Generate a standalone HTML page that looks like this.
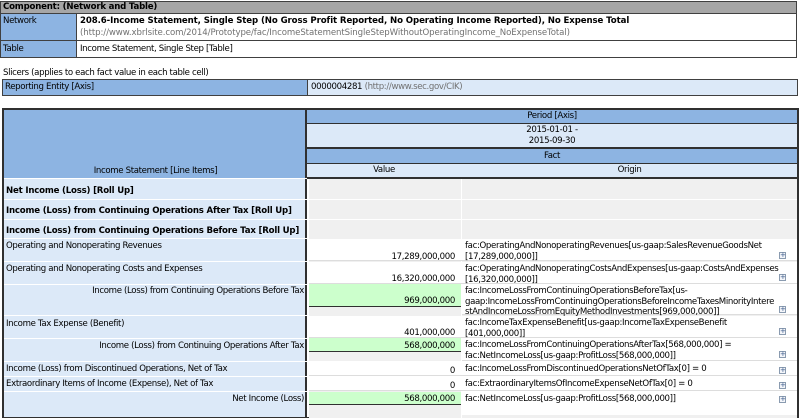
<!DOCTYPE html>
<html><head><meta charset="utf-8"><style>
*{margin:0;padding:0;box-sizing:border-box}
body{width:800px;height:419px;background:#fff;font-family:"DejaVu Sans","Liberation Sans",sans-serif;font-size:8.6px;color:#000;position:relative;overflow:hidden;letter-spacing:-0.35px}
.a{position:absolute;white-space:nowrap}
.b{font-weight:bold;letter-spacing:-0.2px}
.g{color:#707070}
.bl{background:#8db4e2}
.lb{background:#dce9f8}
.gr{background:#f0f0f0}
.gn{background:#ccffcc}
.pl{position:absolute;width:7px;height:7px;border:1px solid #8a9bb0;background:#f4f6fa;font-size:7px;line-height:5px;text-align:center;color:#3a5a8a;letter-spacing:0}
</style></head><body>
<div class="a" style="left:0;top:1px;width:797px;height:13px;background:#a6a6a6;border:1px solid #404040"></div>
<div class="a b" style="left:3px;top:2px">Component: (Network and Table)</div>
<div class="a" style="left:0;top:14px;width:797px;height:44px;border:1px solid #404040;border-top:none"></div>
<div class="a bl" style="left:1px;top:14px;width:76px;height:26px;border-right:1px solid #404040"></div>
<div class="a" style="left:0;top:40px;width:797px;height:1px;background:#404040"></div>
<div class="a bl" style="left:1px;top:41px;width:76px;height:16px;border-right:1px solid #404040"></div>
<div class="a" style="left:3px;top:16px">Network</div>
<div class="a b" style="left:80px;top:16px;letter-spacing:-0.1px">208.6-Income Statement, Single Step (No Gross Profit Reported, No Operating Income Reported), No Expense Total</div>
<div class="a g" style="left:80px;top:28px;letter-spacing:-0.1px">(http://www.xbrlsite.com/2014/Prototype/fac/IncomeStatementSingleStepWithoutOperatingIncome_NoExpenseTotal)</div>
<div class="a" style="left:3px;top:44px">Table</div>
<div class="a" style="left:80px;top:44px">Income Statement, Single Step [Table]</div>
<div class="a" style="left:3px;top:68px">Slicers (applies to each fact value in each table cell)</div>
<div class="a bl" style="left:2px;top:79px;width:306px;height:17px;border:1px solid #404040"></div>
<div class="a lb" style="left:307px;top:79px;width:491px;height:17px;border:1px solid #404040"></div>
<div class="a" style="left:5px;top:82px">Reporting Entity [Axis]</div>
<div class="a" style="left:311px;top:82px">0000004281 <span class="g">(http://www.sec.gov/CIK)</span></div>
<div class="a" style="left:2px;top:108px;width:797px;height:310px;border:2px solid #303030;border-bottom-width:1px"></div>
<div class="a bl" style="left:4px;top:110px;width:303px;height:68px;border-right:2px solid #303030"></div>
<div class="a" style="left:4px;top:166px;width:303px;text-align:center">Income Statement [Line Items]</div>
<div class="a lb" style="left:4px;top:179px;width:303px;height:238px;border-right:2px solid #303030"></div>
<div class="a bl" style="left:307px;top:110px;width:490px;height:14px;border-bottom:1px solid #303030"></div>
<div class="a" style="left:307px;top:111px;width:490px;text-align:center">Period [Axis]</div>
<div class="a lb" style="left:307px;top:124px;width:490px;height:25px;border-bottom:2px solid #303030"></div>
<div class="a" style="left:307px;top:125px;width:490px;text-align:center;line-height:11px">2015-01-01 -<br>2015-09-30</div>
<div class="a bl" style="left:307px;top:149px;width:490px;height:15px;border-bottom:1px solid #303030"></div>
<div class="a" style="left:307px;top:151px;width:490px;text-align:center">Fact</div>
<div class="a lb" style="left:307px;top:164px;width:490px;height:15px;border-bottom:2px solid #303030"></div>
<div class="a" style="left:307px;top:165px;width:154px;text-align:center">Value</div>
<div class="a" style="left:462px;top:165px;width:335px;text-align:center">Origin</div>
<div class="a gr" style="left:309px;top:179px;width:488px;height:239px"></div>
<div class="a" style="left:461px;top:179px;width:1px;height:239px;background:#fff"></div>
<div class="a" style="left:4px;top:199px;width:793px;height:1px;background:#fff"></div>
<div class="a" style="left:4px;top:219px;width:793px;height:1px;background:#fff"></div>
<div class="a" style="left:309px;top:239px;width:488px;height:22px;background:#fff;border-bottom:1px solid #ddd"></div>
<div class="a" style="left:309px;top:262px;width:488px;height:22px;background:#fff;border-bottom:1px solid #ddd"></div>
<div class="a" style="left:462px;top:284px;width:335px;height:31px;background:#fff;border-bottom:1px solid #ddd"></div>
<div class="a gn" style="left:309px;top:284px;width:152px;height:23px;border-bottom:1px solid #303030"></div>
<div class="a" style="left:309px;top:316px;width:488px;height:22px;background:#fff;border-bottom:1px solid #ddd"></div>
<div class="a" style="left:462px;top:338px;width:335px;height:23px;background:#fff;border-bottom:1px solid #ddd"></div>
<div class="a gn" style="left:309px;top:338px;width:152px;height:14px;border-bottom:1px solid #303030"></div>
<div class="a" style="left:309px;top:361px;width:488px;height:15px;background:#fff;border-bottom:1px solid #ddd"></div>
<div class="a" style="left:309px;top:376px;width:488px;height:15px;background:#fff;border-bottom:1px solid #ddd"></div>
<div class="a" style="left:462px;top:391px;width:335px;height:24px;background:#fff"></div>
<div class="a gn" style="left:309px;top:392px;width:152px;height:13px;border-bottom:1px solid #303030"></div>
<div class="a" style="left:4px;top:238px;width:303px;height:1px;background:#fff"></div>
<div class="a" style="left:4px;top:261px;width:303px;height:1px;background:#fff"></div>
<div class="a" style="left:4px;top:284px;width:303px;height:1px;background:#fff"></div>
<div class="a" style="left:4px;top:315px;width:303px;height:1px;background:#fff"></div>
<div class="a" style="left:4px;top:338px;width:303px;height:1px;background:#fff"></div>
<div class="a" style="left:4px;top:361px;width:303px;height:1px;background:#fff"></div>
<div class="a" style="left:4px;top:376px;width:303px;height:1px;background:#fff"></div>
<div class="a" style="left:4px;top:391px;width:303px;height:1px;background:#fff"></div>
<div class="a b" style="left:6px;top:186px">Net Income (Loss) [Roll Up]</div>
<div class="a b" style="left:6px;top:206px">Income (Loss) from Continuing Operations After Tax [Roll Up]</div>
<div class="a b" style="left:6px;top:226px">Income (Loss) from Continuing Operations Before Tax [Roll Up]</div>
<div class="a" style="left:6px;top:241px">Operating and Nonoperating Revenues</div>
<div class="a" style="left:6px;top:264px">Operating and Nonoperating Costs and Expenses</div>
<div class="a" style="right:496px;top:286px">Income (Loss) from Continuing Operations Before Tax</div>
<div class="a" style="left:6px;top:319px">Income Tax Expense (Benefit)</div>
<div class="a" style="right:496px;top:341px">Income (Loss) from Continuing Operations After Tax</div>
<div class="a" style="left:6px;top:364px">Income (Loss) from Discontinued Operations, Net of Tax</div>
<div class="a" style="left:6px;top:379px">Extraordinary Items of Income (Expense), Net of Tax</div>
<div class="a" style="right:496px;top:394px">Net Income (Loss)</div>
<div class="a" style="right:345px;top:252px">17,289,000,000</div>
<div class="a" style="right:345px;top:274px">16,320,000,000</div>
<div class="a" style="right:345px;top:296px">969,000,000</div>
<div class="a" style="right:345px;top:328px">401,000,000</div>
<div class="a" style="right:345px;top:341px">568,000,000</div>
<div class="a" style="right:345px;top:366px">0</div>
<div class="a" style="right:345px;top:381px">0</div>
<div class="a" style="right:345px;top:394px">568,000,000</div>
<div class="a" style="left:465px;top:241px;line-height:10.5px">fac:OperatingAndNonoperatingRevenues[us-gaap:SalesRevenueGoodsNet<br>[17,289,000,000]]</div>
<div class="a" style="left:465px;top:264px;line-height:10.5px">fac:OperatingAndNonoperatingCostsAndExpenses[us-gaap:CostsAndExpenses<br>[16,320,000,000]]</div>
<div class="a" style="left:465px;top:286px;line-height:10.5px">fac:IncomeLossFromContinuingOperationsBeforeTax[us-<br>gaap:IncomeLossFromContinuingOperationsBeforeIncomeTaxesMinorityIntere<br>stAndIncomeLossFromEquityMethodInvestments[969,000,000]]</div>
<div class="a" style="left:465px;top:318px;line-height:10.5px">fac:IncomeTaxExpenseBenefit[us-gaap:IncomeTaxExpenseBenefit<br>[401,000,000]]</div>
<div class="a" style="left:465px;top:340px;line-height:10.5px">fac:IncomeLossFromContinuingOperationsAfterTax[568,000,000] =<br>fac:NetIncomeLoss[us-gaap:ProfitLoss[568,000,000]]</div>
<div class="a" style="left:465px;top:364px">fac:IncomeLossFromDiscontinuedOperationsNetOfTax[0] = 0</div>
<div class="a" style="left:465px;top:379px">fac:ExtraordinaryItemsOfIncomeExpenseNetOfTax[0] = 0</div>
<div class="a" style="left:465px;top:394px">fac:NetIncomeLoss[us-gaap:ProfitLoss[568,000,000]]</div>
<div class="pl" style="left:779px;top:252px">+</div>
<div class="pl" style="left:779px;top:274px">+</div>
<div class="pl" style="left:779px;top:306px">+</div>
<div class="pl" style="left:779px;top:328px">+</div>
<div class="pl" style="left:779px;top:351px">+</div>
<div class="pl" style="left:779px;top:367px">+</div>
<div class="pl" style="left:779px;top:382px">+</div>
<div class="pl" style="left:779px;top:396px">+</div>
</body></html>
